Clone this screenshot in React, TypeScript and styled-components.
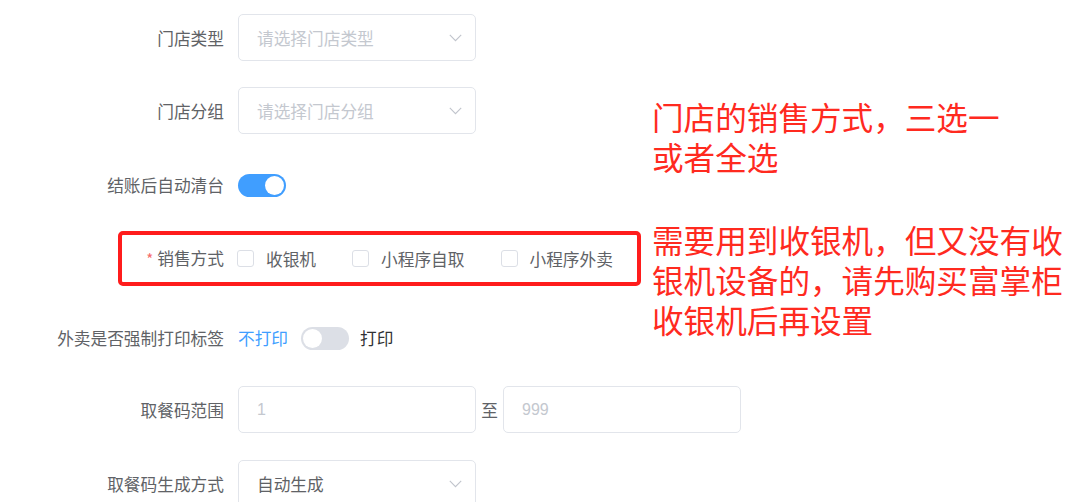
import React from "react";
import styled, { createGlobalStyle } from "styled-components";

const Global = createGlobalStyle`
  html, body { margin: 0; padding: 0; background: #fff; }
  body {
    width: 1080px; height: 502px; overflow: hidden;
    font-family: "Noto Sans CJK SC", "Liberation Sans", sans-serif;
  }
`;

const Page = styled.div`
  position: relative;
  width: 1080px;
  height: 502px;
  padding-top: 14px;
  box-sizing: border-box;
  display: flex;
  flex-direction: column;
  font-size: 16.7px;
  color: #606266;
`;

const FormItem = styled.div<{ $mb?: number }>`
  display: flex;
  align-items: center;
  height: 47px;
  margin-bottom: ${(p) => p.$mb ?? 0}px;
  flex-shrink: 0;
`;

const BoxedItem = styled(FormItem)`
  margin-left: 118px;
  width: 523px;
  height: 55px;
  box-sizing: border-box;
  border: 4px solid #ff1c1c;
  border-radius: 5px;
`;

const Label = styled.div<{ $w?: number }>`
  width: ${(p) => p.$w ?? 238}px;
  flex-shrink: 0;
  box-sizing: border-box;
  padding-right: 14px;
  text-align: right;
  color: #606266;
  line-height: 20px;
  white-space: nowrap;
`;

const Star = styled.span`
  color: #f56c6c;
  margin-right: 4px;
  font-size: 15px;
`;

const Field = styled.div`
  width: 238px;
  height: 47px;
  box-sizing: border-box;
  border: 1px solid #e2e5eb;
  border-radius: 5px;
  display: flex;
  align-items: center;
  justify-content: space-between;
  padding: 0 13px 0 18px;
  flex-shrink: 0;
`;

const FieldText = styled.span<{ $placeholder?: boolean; $num?: boolean }>`
  color: ${(p) => (p.$placeholder ? "#c4c8cf" : "#606266")};
  font-family: ${(p) =>
    p.$num
      ? `"Liberation Sans", Arial, sans-serif`
      : `"Noto Sans CJK SC", sans-serif`};
  font-size: ${(p) => (p.$num ? "16px" : "16.7px")};
  line-height: 20px;
`;

const Sep = styled.span`
  width: 27px;
  text-align: center;
  color: #606266;
  flex-shrink: 0;
  line-height: 20px;
`;

const Switch = styled.span<{ $on?: boolean }>`
  position: relative;
  display: inline-block;
  width: 48px;
  height: 23px;
  border-radius: 12px;
  background: ${(p) => (p.$on ? "#409eff" : "#dcdfe6")};
  flex-shrink: 0;
  &::after {
    content: "";
    position: absolute;
    top: 2px;
    left: ${(p) => (p.$on ? "27px" : "2px")};
    width: 19px;
    height: 19px;
    border-radius: 50%;
    background: #fff;
  }
`;

const SwitchText = styled.span<{ $active?: boolean; $side: "left" | "right" }>`
  color: ${(p) => (p.$active ? "#409eff" : "#303133")};
  margin-right: ${(p) => (p.$side === "left" ? "13px" : "0")};
  margin-left: ${(p) => (p.$side === "right" ? "11px" : "0")};
  line-height: 20px;
`;

const CheckGroup = styled.div`
  display: flex;
  align-items: center;
  margin-left: -1px;
`;

const CheckItem = styled.label`
  display: flex;
  align-items: center;
  margin-right: 36px;
  color: #606266;
  line-height: 20px;
  &:last-child { margin-right: 0; }
`;

const Box = styled.span`
  width: 17px;
  height: 17px;
  box-sizing: border-box;
  border: 1px solid #dcdfe6;
  border-radius: 3px;
  background: #fff;
  margin-right: 12px;
  flex-shrink: 0;
`;

const Note = styled.div`
  position: absolute;
  left: 652px;
  top: 96px;
  color: #ff2a1f;
  font-family: "Noto Sans CJK SC", sans-serif;
  font-size: 31.6px;
  line-height: 40px;
  white-space: nowrap;
`;

const NotePara = styled.p<{ $mt?: number }>`
  margin: ${(p) => p.$mt ?? 0}px 0 0 0;
`;

const Chevron = () => (
  <svg width="13" height="8" viewBox="0 0 13 8" fill="none">
    <path d="M0.8 0.8 L6.5 6.6 L12.2 0.8" stroke="#c0c4cc" strokeWidth="1.1" />
  </svg>
);

export default function App() {
  return (
    <>
      <Global />
      <Page>
        <FormItem $mb={26}>
          <Label>门店类型</Label>
          <Field>
            <FieldText $placeholder>请选择门店类型</FieldText>
            <Chevron />
          </Field>
        </FormItem>
        <FormItem $mb={27.5}>
          <Label>门店分组</Label>
          <Field>
            <FieldText $placeholder>请选择门店分组</FieldText>
            <Chevron />
          </Field>
        </FormItem>
        <FormItem $mb={22.5}>
          <Label>结账后自动清台</Label>
          <Switch $on />
        </FormItem>
        <BoxedItem $mb={28.5}>
          <Label $w={116}>
            <Star>*</Star>销售方式
          </Label>
          <CheckGroup>
            <CheckItem>
              <Box />
              收银机
            </CheckItem>
            <CheckItem>
              <Box />
              小程序自取
            </CheckItem>
            <CheckItem>
              <Box />
              小程序外卖
            </CheckItem>
          </CheckGroup>
        </BoxedItem>
        <FormItem $mb={24.5}>
          <Label>外卖是否强制打印标签</Label>
          <SwitchText $active $side="left">不打印</SwitchText>
          <Switch />
          <SwitchText $side="right">打印</SwitchText>
        </FormItem>
        <FormItem $mb={27}>
          <Label>取餐码范围</Label>
          <Field>
            <FieldText $placeholder $num>1</FieldText>
          </Field>
          <Sep>至</Sep>
          <Field>
            <FieldText $placeholder $num>999</FieldText>
          </Field>
        </FormItem>
        <FormItem>
          <Label>取餐码生成方式</Label>
          <Field>
            <FieldText>自动生成</FieldText>
            <Chevron />
          </Field>
        </FormItem>
        <Note>
          <NotePara>
            门店的销售方式，三选一
            <br />
            或者全选
          </NotePara>
          <NotePara $mt={43}>
            需要用到收银机，但又没有收
            <br />
            银机设备的，请先购买富掌柜
            <br />
            收银机后再设置
          </NotePara>
        </Note>
      </Page>
    </>
  );
}
